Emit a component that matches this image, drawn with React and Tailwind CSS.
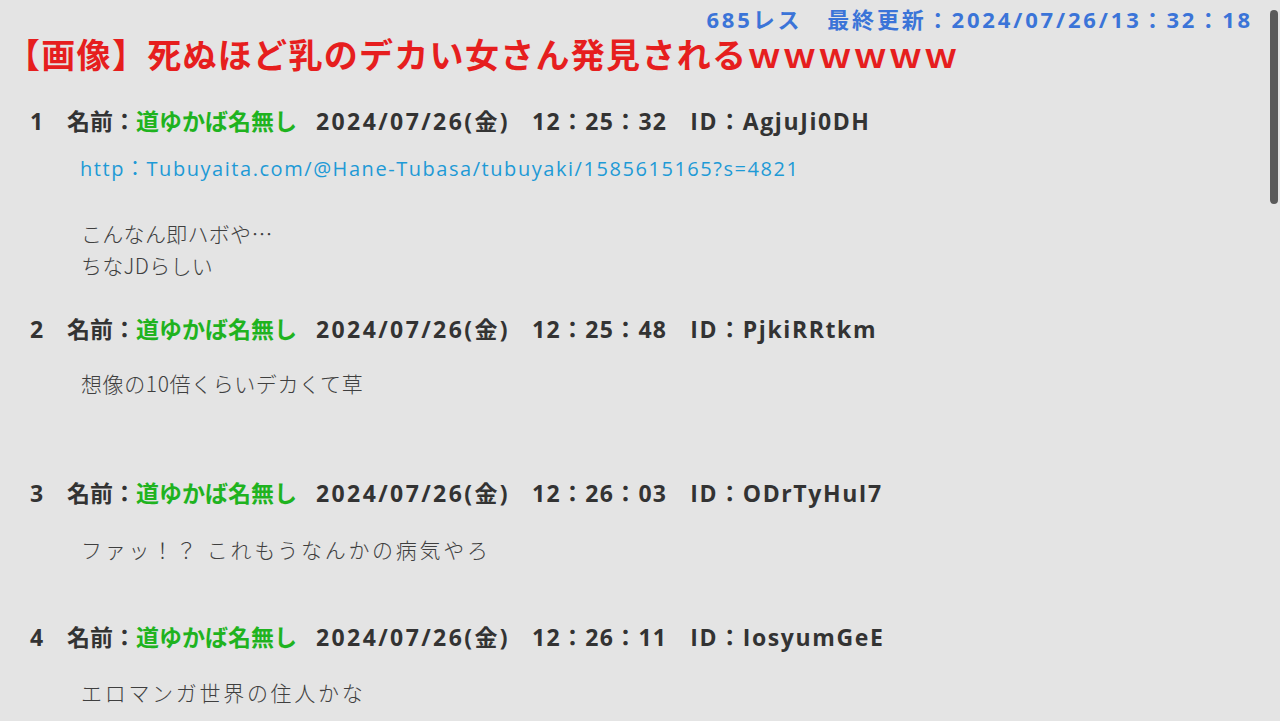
import React from 'react';

const posts = [
  {
    no: 1,
    date: '2024/07/26(金)',
    time: '12：25：32',
    id: 'AgjuJi0DH',
    link: 'http：Tubuyaita.com/@Hane-Tubasa/tubuyaki/1585615165?s=4821',
    body: ['こんなん即ハボや…', 'ちなJDらしい'],
    top: 'mt-[34px]',
    bodyTop: 'mt-[34px]',
    track: 'tracking-[0.3px]',
  },
  {
    no: 2,
    date: '2024/07/26(金)',
    time: '12：25：48',
    id: 'PjkiRRtkm',
    body: ['想像の10倍くらいデカくて草'],
    top: 'mt-[34px]',
    bodyTop: 'mt-[24px]',
    track: 'tracking-[0.6px]',
  },
  {
    no: 3,
    date: '2024/07/26(金)',
    time: '12：26：03',
    id: 'ODrTyHuI7',
    body: ['ファッ！？ これもうなんかの病気やろ'],
    top: 'mt-[80px]',
    bodyTop: 'mt-[26px]',
    track: 'tracking-[2.7px]',
  },
  {
    no: 4,
    date: '2024/07/26(金)',
    time: '12：26：11',
    id: 'IosyumGeE',
    body: ['エロマンガ世界の住人かな'],
    top: 'mt-[58px]',
    bodyTop: 'mt-[25px]',
    track: 'tracking-[2.7px]',
  },
];

function Post({ post }) {
  return (
    <div>
      <div className={`${post.top} flex h-[28px] items-center pl-[30px] text-[23px] font-bold leading-[28px] text-[#333]`}>
        <span className="w-[37px]">{post.no}</span>
        <span>名前：</span>
        <span className="text-[#1fb31f]">道ゆかば名無し</span>
        <span className="ml-[19px] tracking-[2.4px]">{post.date}</span>
        <span className="ml-[22px] tracking-[1.3px]">{post.time}</span>
        <span className="ml-[23px] tracking-[1.6px]">ID：{post.id}</span>
      </div>

      {post.link && (
        <div className="mt-[20px] h-[28px] pl-[80px] text-[20px] leading-[28px] tracking-[1.55px] text-[#1e9ad6]">
          {post.link}
        </div>
      )}

      <div
        className={`${post.bodyTop} ${post.track} pl-[81px] text-[21px] font-light leading-[32px] text-[#3f3f3f]`}
        style={{ fontFamily: '"Noto Sans CJK JP", sans-serif' }}
      >
        {post.body.map((line) => (
          <div key={line}>{line}</div>
        ))}
      </div>
    </div>
  );
}

export default function App() {
  return (
    <div
      className="relative h-[721px] overflow-hidden bg-[#e4e4e4]"
      style={{ fontFamily: '"Open Sans", "Noto Sans CJK JP", sans-serif' }}
    >
      {/* thread meta */}
      <div className="mt-[5px] flex h-[28px] justify-end pr-[27px] text-[22px] font-bold leading-[28px] tracking-[2.85px] text-[#3b74d8]">
        685レス　最終更新：2024/07/26/13：32：18
      </div>

      {/* thread title */}
      <h1 className="mt-[4px] h-[36px] pl-[6px] text-[34px] font-bold leading-[36px] tracking-[1.3px] text-[#e61e1e]">
        【画像】死ぬほど乳のデカい女さん発見されるｗｗｗｗｗｗ
      </h1>

      {posts.map((p) => (
        <Post key={p.no} post={p} />
      ))}

      {/* overlay scrollbar thumb */}
      <div className="absolute right-[2px] top-[10px] h-[194px] w-[8px] rounded-full bg-[#5a5a5a]" />
    </div>
  );
}
